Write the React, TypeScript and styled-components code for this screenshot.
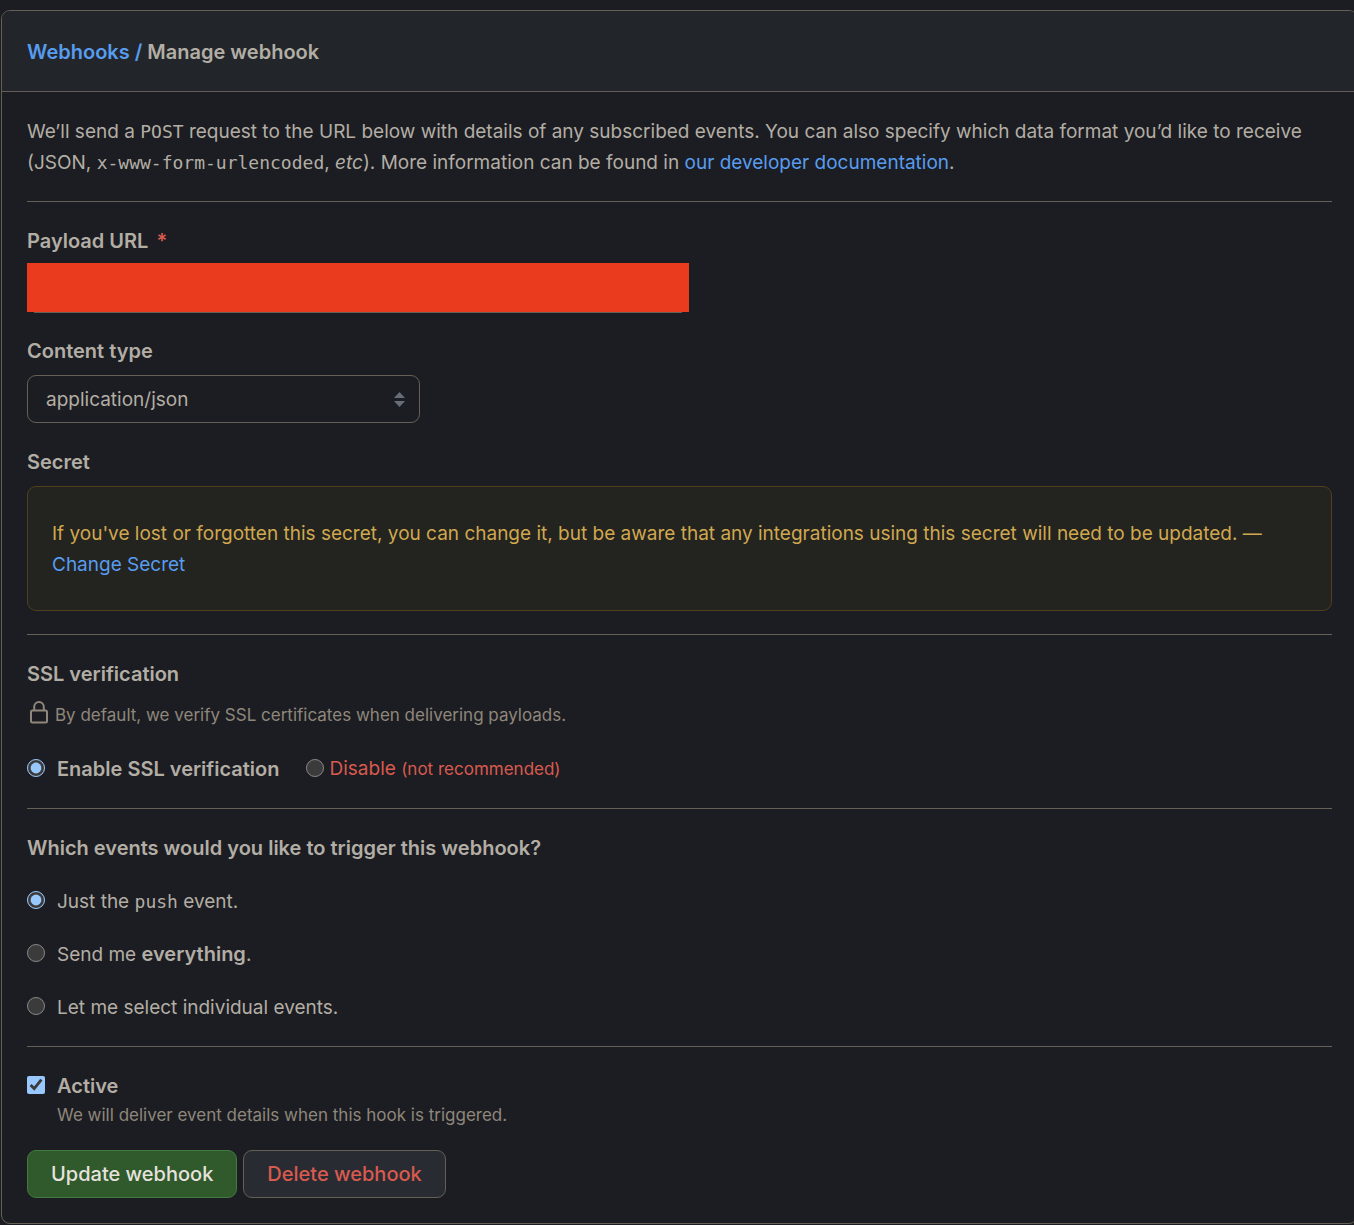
import React from "react";
import styled, { createGlobalStyle } from "styled-components";

const color = {
  page: "#1c1d22",
  header: "#22262a",
  line: "#655f56",
  text: "#b3aea5",
  muted: "#8f877b",
  link: "#589cef",
  danger: "#d95a4e",
  warn: "#d0a84f",
};

const size = {
  small: "17px",
  body: "19px",
  strong: "20px",
};

const GlobalStyle = createGlobalStyle`
  *, *::before, *::after { box-sizing: border-box; }
  html { color-scheme: dark; background: ${color.page}; }
  body {
    margin: 0;
    overflow-x: hidden;
    background: ${color.page};
    color: ${color.text};
    font: ${size.body}/31px Inter, "Liberation Sans", sans-serif;
  }
`;

const Panel = styled.main`
  margin: 10px -4px 1px 1px;
  border: 1px solid ${color.line};
  border-radius: 9px;
  overflow: hidden;
`;

const PanelHeader = styled.header`
  padding: 26px 25px 23px;
  background: ${color.header};
  border-bottom: 1px solid ${color.line};
`;

const Title = styled.h1`
  margin: 0;
  font-size: ${size.strong};
  line-height: 31px;
  font-weight: 600;
`;

const Link = styled.a`
  color: ${color.link};
  text-decoration: none;
  &:hover { text-decoration: underline; }
`;

const Form = styled.form`
  padding: 24px 25px 25px;
`;

const Intro = styled.p`
  margin: 0;
`;

const Code = styled.code`
  font-family: "DejaVu Sans Mono", monospace;
  font-size: 18px;
  line-height: 1;
`;

const Divider = styled.hr`
  height: 1px;
  margin: 23px 0 24px;
  border: 0;
  background: ${color.line};
`;

const Field = styled.div<{ $tight?: boolean }>`
  display: flex;
  flex-direction: column;
  align-items: flex-start;
  gap: ${(p) => (p.$tight ? "6px" : "8px")};
  & + & { margin-top: 24px; }
`;

const FieldLabel = styled.label`
  font-size: ${size.strong};
  font-weight: 600;
`;

const Heading = styled.h2`
  margin: 0;
  font-size: ${size.strong};
  line-height: 31px;
  font-weight: 600;
`;

const Required = styled.span`
  margin-left: 8px;
  color: ${color.danger};
`;

const RedactedInput = styled.input`
  width: 100%;
  max-width: 662px;
  height: 49px;
  padding: 0 18px;
  border: 0;
  background: #eb3b1e;
  box-shadow: 0 8px 0 -7px ${color.line};
  color: transparent;
  font: inherit;
`;

const SelectWrap = styled.div`
  display: grid;
  align-items: center;
  width: 393px;
  max-width: 100%;
  & > * { grid-area: 1 / 1; }
  & > svg { justify-self: end; margin-right: 15px; pointer-events: none; }
`;

const Select = styled.select`
  appearance: none;
  width: 100%;
  height: 48px;
  padding: 0 40px 0 18px;
  border: 1px solid ${color.line};
  border-radius: 9px;
  background: ${color.page};
  color: ${color.text};
  font: inherit;
`;

const Warning = styled.div`
  width: 100%;
  padding: 31px 24px 30px;
  border: 1px solid #4f3f1c;
  border-radius: 9px;
  background: #232320;
  color: ${color.warn};
`;

const Note = styled.p`
  display: flex;
  align-items: flex-start;
  gap: 6px;
  margin: 10px 0 0;
  padding-left: 2px;
  color: ${color.muted};
  font-size: ${size.small};
  & > svg { margin-top: 1px; }
`;

const Toggle = styled.input`
  flex: none;
  width: 18px;
  height: 18px;
  margin: 0 0 3px;
`;

const Choices = styled.div<{ $inline?: boolean }>`
  display: flex;
  flex-direction: ${(p) => (p.$inline ? "row" : "column")};
  flex-wrap: wrap;
  gap: ${(p) => (p.$inline ? "26px" : "22px")};
  margin-top: 22px;
`;

const Choice = styled.label<{ $danger?: boolean; $strong?: boolean }>`
  display: flex;
  align-items: center;
  gap: ${(p) => (p.$danger ? "6px" : "12px")};
  color: ${(p) => (p.$danger ? color.danger : "inherit")};
  font-size: ${(p) => (p.$strong ? size.strong : size.body)};
  font-weight: ${(p) => (p.$strong ? 600 : 400)};
`;

const Strong = styled.strong`
  font-size: ${size.strong};
  font-weight: 600;
`;

const Small = styled.small`
  font-size: ${size.small};
`;

const Hint = styled.p`
  margin: 0;
  padding-left: 30px;
  color: ${color.muted};
  font-size: ${size.small};
  line-height: 27px;
`;

const Actions = styled.div`
  display: flex;
  flex-wrap: wrap;
  gap: 6px;
  margin-top: 21px;
`;

const Button = styled.button<{ $primary?: boolean }>`
  height: 48px;
  padding: 0 23px;
  border: 1px solid ${(p) => (p.$primary ? "#417a3f" : color.line)};
  border-radius: 9px;
  background: ${(p) => (p.$primary ? "#30592c" : "#282b32")};
  color: ${(p) => (p.$primary ? "#e6e3de" : color.danger)};
  font-family: inherit;
  font-size: ${size.strong};
  font-weight: 500;
  cursor: pointer;
`;

const LockIcon = () => (
  <svg width="20" height="24" viewBox="0 0 20 24" fill="none" stroke="currentColor" strokeWidth="2" aria-hidden="true">
    <rect x="2" y="9.5" width="16" height="12" rx="1.5" />
    <path d="M5.2 9.5V5.8a4.8 4.8 0 0 1 9.6 0v3.7" />
  </svg>
);

const SelectArrows = () => (
  <svg width="11" height="15" viewBox="0 0 11 15" fill="#676e79" aria-hidden="true">
    <path d="M0 6 5.5 0 11 6zM0 9h11l-5.500 6z" />
  </svg>
);

export default function App() {
  return (
    <>
      <GlobalStyle />
      <Panel>
        <PanelHeader>
          <Title>
            <Link href="#webhooks">Webhooks /</Link> Manage webhook
          </Title>
        </PanelHeader>
        <Form onSubmit={(e) => e.preventDefault()}>
          <Intro>
            We’ll send a <Code>POST</Code> request to the URL below with details of any subscribed events. You can also
            specify which data format you’d like to receive (JSON, <Code>x-www-form-urlencoded</Code>, <em>etc</em>).
            More information can be found in <Link href="#docs">our developer documentation</Link>.
          </Intro>
          <Divider />

          <Field $tight>
            <FieldLabel htmlFor="payload-url">
              Payload URL<Required>*</Required>
            </FieldLabel>
            <RedactedInput id="payload-url" type="text" />
          </Field>
          <Field>
            <FieldLabel htmlFor="content-type">Content type</FieldLabel>
            <SelectWrap>
              <Select id="content-type" defaultValue="json">
                <option value="json">application/json</option>
              </Select>
              <SelectArrows />
            </SelectWrap>
          </Field>
          <Field>
            <Heading>Secret</Heading>
            <Warning>
              If you've lost or forgotten this secret, you can change it, but be aware that any integrations using this
              secret will need to be updated. — <Link href="#secret">Change Secret</Link>
            </Warning>
          </Field>
          <Divider />

          <Heading>SSL verification</Heading>
          <Note>
            <LockIcon />
            By default, we verify SSL certificates when delivering payloads.
          </Note>
          <Choices $inline>
            <Choice $strong>
              <Toggle type="radio" name="ssl" defaultChecked />
              Enable SSL verification
            </Choice>
            <Choice $danger>
              <Toggle type="radio" name="ssl" />
              <span>
                Disable <Small>(not recommended)</Small>
              </span>
            </Choice>
          </Choices>
          <Divider />

          <Heading>Which events would you like to trigger this webhook?</Heading>
          <Choices>
            <Choice>
              <Toggle type="radio" name="events" defaultChecked />
              <span>
                Just the <Code>push</Code> event.
              </span>
            </Choice>
            <Choice>
              <Toggle type="radio" name="events" />
              <span>
                Send me <Strong>everything</Strong>.
              </span>
            </Choice>
            <Choice>
              <Toggle type="radio" name="events" />
              <span>Let me select individual events.</span>
            </Choice>
          </Choices>
          <Divider />

          <Choice $strong>
            <Toggle type="checkbox" defaultChecked aria-describedby="active-hint" />
            Active
          </Choice>
          <Hint id="active-hint">We will deliver event details when this hook is triggered.</Hint>
          <Actions>
            <Button type="submit" $primary>
              Update webhook
            </Button>
            <Button type="button">Delete webhook</Button>
          </Actions>
        </Form>
      </Panel>
    </>
  );
}
